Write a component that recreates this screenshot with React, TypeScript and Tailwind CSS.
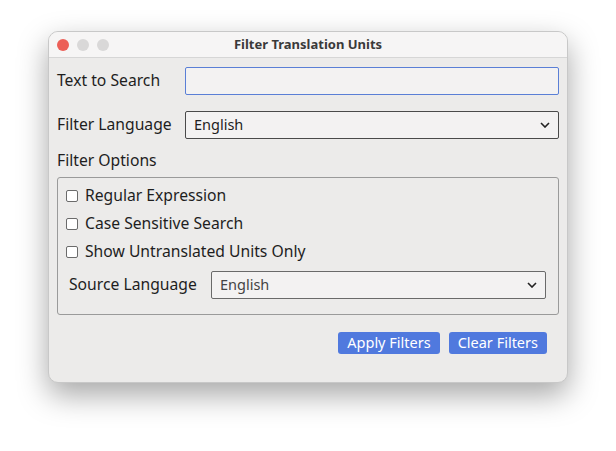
import React from "react";

const Chevron = () => (
  <svg width="10" height="6" viewBox="0 0 10 6" className="shrink-0">
    <path d="M1 1l4 4 4-4" fill="none" stroke="#222" strokeWidth="1.6" />
  </svg>
);

const Check = ({ label }: { label: string }) => (
  <label className="flex items-center gap-[7px] h-[20px]">
    <span className="w-[12px] h-[12px] border border-[#6b6b6b] rounded-[2px] bg-white" />
    <span>{label}</span>
  </label>
);

export default function App() {
  return (
    <div className="w-[616px] h-[451px] bg-white pt-[31px] pl-[48px]" style={{ fontFamily: '"Noto Sans", sans-serif' }}>
      <div className="w-[520px] h-[352px] rounded-[10px] bg-[#ecebea] overflow-hidden shadow-[0_12px_30px_rgba(0,0,0,0.35)] border border-[#c8c8c8] text-[15.7px] text-[#1e1e1e]">
        <div className="h-[26px] bg-[#f6f5f5] border-b border-[#d6d6d6] flex items-center relative">
          <div className="flex gap-[8px] pl-[8px]">
            <span className="w-[12px] h-[12px] rounded-full bg-[#ec5f57]" />
            <span className="w-[12px] h-[12px] rounded-full bg-[#d9d8d8]" />
            <span className="w-[12px] h-[12px] rounded-full bg-[#d9d8d8]" />
          </div>
          <div className="absolute inset-0 flex items-center justify-center text-[13px] font-bold text-[#3a3a3a]">Filter Translation Units</div>
        </div>
        <div className="px-[8px] pt-[9px]">
          <div className="flex items-center h-[28px]">
            <span className="w-[128px]">Text to Search</span>
            <div className="flex-1 h-[28px] border border-[#5a7fd6] bg-[#f3f2f2] rounded-[2px]" />
          </div>
          <div className="flex items-center h-[28px] mt-[16px]">
            <span className="w-[128px]">Filter Language</span>
            <div className="flex-1 h-[28px] border border-[#4a4a4a] bg-[#f3f2f2] rounded-[2px] flex items-center justify-between px-[8px] text-[14.5px]">
              <span>English</span>
              <Chevron />
            </div>
          </div>
          <div className="mt-[10px] h-[24px] flex items-center">Filter Options</div>
          <div className="mt-[4px] h-[138px] border border-[#9a9a9a] rounded-[3px] px-[8px] pt-[8px]">
            <div className="flex flex-col gap-[8px]">
              <Check label="Regular Expression" />
              <Check label="Case Sensitive Search" />
              <Check label="Show Untranslated Units Only" />
            </div>
            <div className="flex items-center h-[28px] mt-[9px] pr-[4px]">
              <span className="w-[145px] pl-[3px]">Source Language</span>
              <div className="flex-1 h-[28px] border border-[#6a6a6a] bg-[#f3f2f2] rounded-[2px] flex items-center justify-between px-[8px] text-[14.5px] text-[#444]">
                <span>English</span>
                <Chevron />
              </div>
            </div>
          </div>
          <div className="flex justify-end gap-[9px] mt-[17px] pr-[12px]">
            <button className="h-[22px] px-[9px] rounded-[3px] bg-[#5079de] text-white text-[14.5px]">Apply Filters</button>
            <button className="h-[22px] px-[9px] rounded-[3px] bg-[#5079de] text-white text-[14.5px]">Clear Filters</button>
          </div>
        </div>
      </div>
    </div>
  );
}
